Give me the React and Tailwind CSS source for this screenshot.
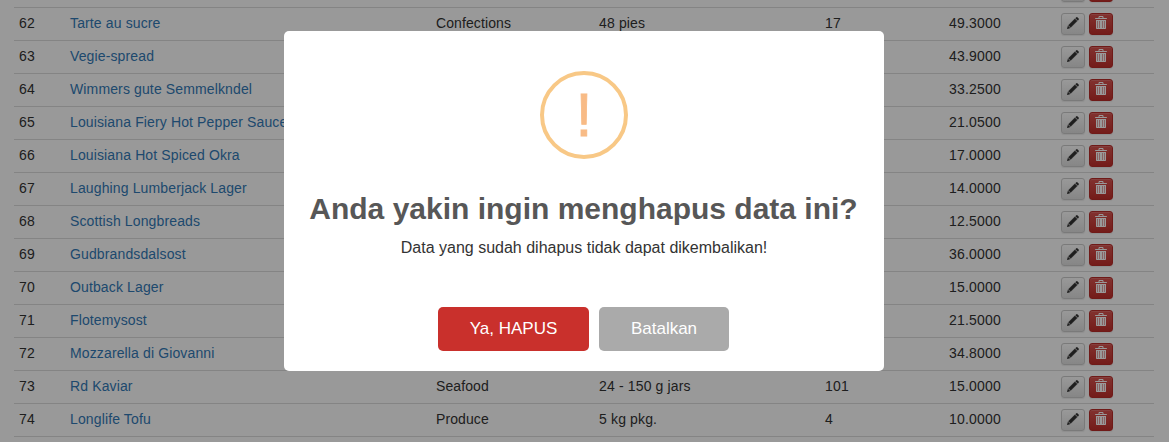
const products = [
  { id: 62, name: 'Tarte au sucre', category: 'Confections', unit: '48 pies', stock: 17, price: '49.3000' },
  { id: 63, name: 'Vegie-spread', price: '43.9000' },
  { id: 64, name: 'Wimmers gute Semmelkndel', price: '33.2500' },
  { id: 65, name: 'Louisiana Fiery Hot Pepper Sauce', price: '21.0500' },
  { id: 66, name: 'Louisiana Hot Spiced Okra', price: '17.0000' },
  { id: 67, name: 'Laughing Lumberjack Lager', price: '14.0000' },
  { id: 68, name: 'Scottish Longbreads', price: '12.5000' },
  { id: 69, name: 'Gudbrandsdalsost', price: '36.0000' },
  { id: 70, name: 'Outback Lager', price: '15.0000' },
  { id: 71, name: 'Flotemysost', price: '21.5000' },
  { id: 72, name: 'Mozzarella di Giovanni', price: '34.8000' },
  { id: 73, name: 'Rd Kaviar', category: 'Seafood', unit: '24 - 150 g jars', stock: 101, price: '15.0000' },
  { id: 74, name: 'Longlife Tofu', category: 'Produce', unit: '5 kg pkg.', stock: 4, price: '10.0000' },
];

function PencilIcon() {
  return (
    <svg width="12" height="12" viewBox="0 0 12 12" fill="currentColor" stroke="currentColor" strokeWidth=".3" className="block">
      <path d="M.1 11.9 L1 8.9 L3.1 11 Z" />
      <path d="M1.4 8.3 L7.9 1.8 L10.2 4.1 L3.7 10.6 Z" />
      <path d="M8.5 1.2 L9.4 .3 Q9.8 0 10.2 .3 L11.7 1.8 Q12 2.2 11.7 2.6 L10.8 3.5 Z" />
    </svg>
  );
}

function TrashIcon() {
  return (
    <svg width="12" height="13" viewBox="0 0 12 13" className="block">
      <path d="M4 2 V.5 H8 V2" fill="none" stroke="#fff" />
      <path d="M0 3 V2.5 Q0 2 .8 2 H11.2 Q12 2 12 2.5 V3 Z" fill="#fff" />
      <path d="M1 4 H11 V12.3 Q11 13 10.3 13 H1.7 Q1 13 1 12.3 Z" fill="#fff" />
      <path d="M2.5 5 V12 M4.5 5 V12 M7.5 5 V12 M9.5 5 V12" stroke="#e3a3a3" />
    </svg>
  );
}

function RowActions() {
  return (
    <div className="flex gap-1">
      <button className="flex h-[22px] w-6 justify-center rounded-[3px] border border-[#ccc] bg-linear-to-b from-white to-[#e0e0e0] pt-[3px] text-[#333] shadow-[inset_0_1px_0_rgba(255,255,255,.15),0_1px_1px_rgba(0,0,0,.075)]">
        <PencilIcon />
      </button>
      <button className="flex h-[22px] w-6 justify-center rounded-[3px] border border-[#b92c28] bg-linear-to-b from-[#d9534f] to-[#c12e2a] pt-[2px] shadow-[inset_0_1px_0_rgba(255,255,255,.15),0_1px_1px_rgba(0,0,0,.075)]">
        <TrashIcon />
      </button>
    </div>
  );
}

function ProductRow({ product }) {
  return (
    <div className="grid h-[33px] shrink-0 grid-cols-[51px_366px_163px_226px_124px_112px_1fr] border-t border-[#ddd] pl-[5px] pt-[5px] leading-5">
      <span>{product.id}</span>
      <a className="whitespace-nowrap tracking-[0.13px] text-[#337ab7]">{product.name}</a>
      <span className="tracking-[0.1px]">{product.category}</span>
      <span className="tracking-[0.15px]">{product.unit}</span>
      <span>{product.stock}</span>
      <span>{product.price}</span>
      <RowActions />
    </div>
  );
}

function ConfirmDialog() {
  return (
    <div className="absolute inset-0 flex items-start justify-center bg-black/40 pt-[31px] pr-px">
      <div className="flex h-[340px] w-[600px] flex-col items-center rounded-[5px] bg-white pt-10">
        <div className="flex h-[88px] w-[88px] items-center justify-center rounded-full border-4 border-[#f8c886] pb-px text-[61px] leading-[78px] text-[#f8bb86] [-webkit-text-stroke:0.8px_#f8bb86]">
          !
        </div>
        <h2 className="mt-[30px] whitespace-nowrap pr-px text-[30px] font-bold leading-10 text-[#575757]">
          Anda yakin ingin menghapus data ini?
        </h2>
        <p className="mt-[9px] text-base leading-5 text-[#333]">Data yang sudah dihapus tidak dapat dikembalikan!</p>
        <div className="mt-[49px] flex gap-[10px] pr-[2px] text-[17px] leading-6 text-white">
          <button className="h-11 w-[151px] rounded-[5px] bg-[#c9302c] pl-px">Ya, HAPUS</button>
          <button className="h-11 w-[130px] rounded-[5px] bg-[#aaa] pl-px">Batalkan</button>
        </div>
      </div>
    </div>
  );
}

export default function App() {
  return (
    <div className="relative h-[442px] w-[1169px] overflow-hidden bg-white font-['Liberation_Sans',Arial,sans-serif]">
      <div className="ml-[14px] flex w-[1140px] flex-col border-b border-[#ddd] text-sm tracking-[0.2px] text-[#333]">
        <div className="flex h-[7px] shrink-0 items-end overflow-hidden pb-[5px] pl-[1047px]">
          <RowActions />
        </div>
        {products.map((product) => (
          <ProductRow key={product.id} product={product} />
        ))}
      </div>
      <ConfirmDialog />
    </div>
  );
}
